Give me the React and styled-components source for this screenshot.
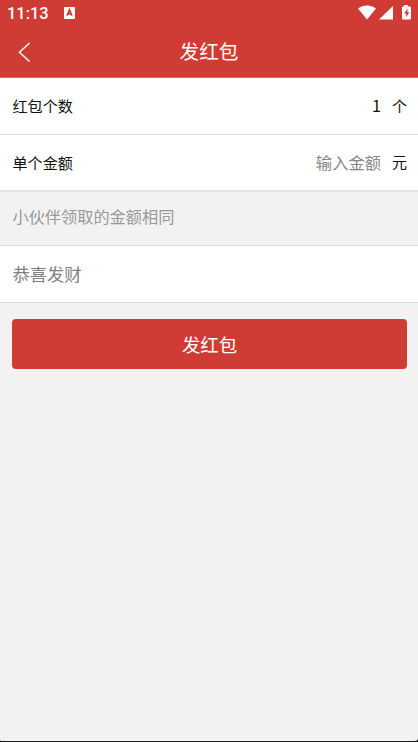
import styled, { createGlobalStyle } from 'styled-components'

const GlobalStyle = createGlobalStyle`
  * {
    box-sizing: border-box;
  }

  body {
    margin: 0;
    background: #f2f2f2;
    font-family: 'Noto Sans CJK SC', sans-serif;
    color: #111;
  }
`

const Screen = styled.div`
  display: flex;
  flex-direction: column;
  height: 742px;
  overflow: hidden;
  background: #1b1b1b;
`

const Page = styled.div`
  display: flex;
  flex-direction: column;
  height: 741px;
  overflow: hidden;
  border-radius: 0 0 3px 1px;
  background: #f2f2f2;
`

const StatusBar = styled.div`
  display: flex;
  align-items: center;
  height: 26px;
  padding: 0 6px 0 7px;
  background: #cf3c35;
  color: #fff;
`

const Clock = styled.span`
  width: 57px;
  padding-top: 1px;
  font-family: Roboto, sans-serif;
  font-size: 16.4px;
  font-weight: 500;
  line-height: 26px;
`

const StatusIcons = styled.div`
  display: flex;
  align-items: center;
  margin-left: auto;
`

const Header = styled.header`
  display: grid;
  grid-template-columns: 50px 1fr 50px;
  align-items: center;
  height: 52px;
  background: #cf3c35;
  color: #fff;
  border-bottom: 1px solid #d9665f;
`

const BackButton = styled.button`
  display: flex;
  padding: 0 0 0 17px;
  border: none;
  background: none;
  color: inherit;
`

const Title = styled.h1`
  margin: 0;
  font-size: 19.6px;
  font-weight: 400;
  line-height: 49px;
  padding-bottom: 2px;
  text-align: center;
`

const Row = styled.div`
  display: flex;
  align-items: center;
  height: 57px;
  padding: 0 11px 2px 12.5px;
  background: #fff;
  border-bottom: ${({ $border }) => $border};
`

const Label = styled.span`
  flex: 1;
  font-size: 15.1px;
`

const Value = styled.span`
  font-size: 16.3px;
  color: ${({ $placeholder }) => ($placeholder ? '#858585' : '#111')};
`

const Unit = styled.span`
  margin-left: 11px;
  font-size: 15px;
`

const Hint = styled.p`
  height: 54px;
  margin: 0;
  padding-left: 12.5px;
  border-bottom: 1px solid #dadada;
  font-size: 16.2px;
  line-height: 49px;
  color: #999;
`

const Greeting = styled.span`
  font-size: 17.3px;
  color: #808080;
`

const SendButton = styled.button`
  height: 50px;
  margin: 16px 11px 0 12px;
  padding: 0;
  border: none;
  border-radius: 4px;
  background: #cf3c35;
  color: #fff;
  font-family: inherit;
  font-size: 18.4px;
  line-height: 50px;
`

function KeyboardIcon() {
  return (
    <svg width="11" height="12" viewBox="0 0 11 12">
      <rect width="11" height="12" rx="1" fill="#fff" />
      <path
        d="M3 8.6 5.5 2.8 8 8.6M4 6.8h3"
        fill="none"
        stroke="#cf3c35"
        strokeWidth="1.7"
      />
    </svg>
  )
}

function SignalIcons() {
  return (
    <svg width="54" height="16" viewBox="0 0 54 16" fill="#fff">
      <path d="M0 3.5C5-.6 13-.6 18 3.5L9 14.5Z" />
      <path d="M35 1v13.5H21Z" />
      <path d="M46 0h4v1.5h2q1 0 1 1v11q0 1-1 1h-7q-1 0-1-1v-11q0-1 1-1h1Z" />
      <path d="m49.5 3.5-3.4 5h2v3.7l3.2-5h-1.8Z" fill="#cf3c35" />
    </svg>
  )
}

export default function App() {
  return (
    <>
      <GlobalStyle />
      <Screen>
        <Page>
          <StatusBar>
            <Clock>11:13</Clock>
            <KeyboardIcon />
            <StatusIcons>
              <SignalIcons />
            </StatusIcons>
          </StatusBar>
          <Header>
            <BackButton aria-label="返回">
              <svg width="14" height="20" viewBox="0 0 14 20">
                <path
                  d="M12.6.9 2.4 10.2l10.2 9.3"
                  fill="none"
                  stroke="#fff"
                  strokeWidth="1.4"
                />
              </svg>
            </BackButton>
            <Title>发红包</Title>
          </Header>
          <Row $border="1px solid #e2e2e2">
            <Label>红包个数</Label>
            <Value>1</Value>
            <Unit>个</Unit>
          </Row>
          <Row $border="2px solid #e4e4e4">
            <Label>单个金额</Label>
            <Value $placeholder>输入金额</Value>
            <Unit>元</Unit>
          </Row>
          <Hint>小伙伴领取的金额相同</Hint>
          <Row $border="1px solid #dcdcdc">
            <Greeting>恭喜发财</Greeting>
          </Row>
          <SendButton>发红包</SendButton>
        </Page>
      </Screen>
    </>
  )
}
